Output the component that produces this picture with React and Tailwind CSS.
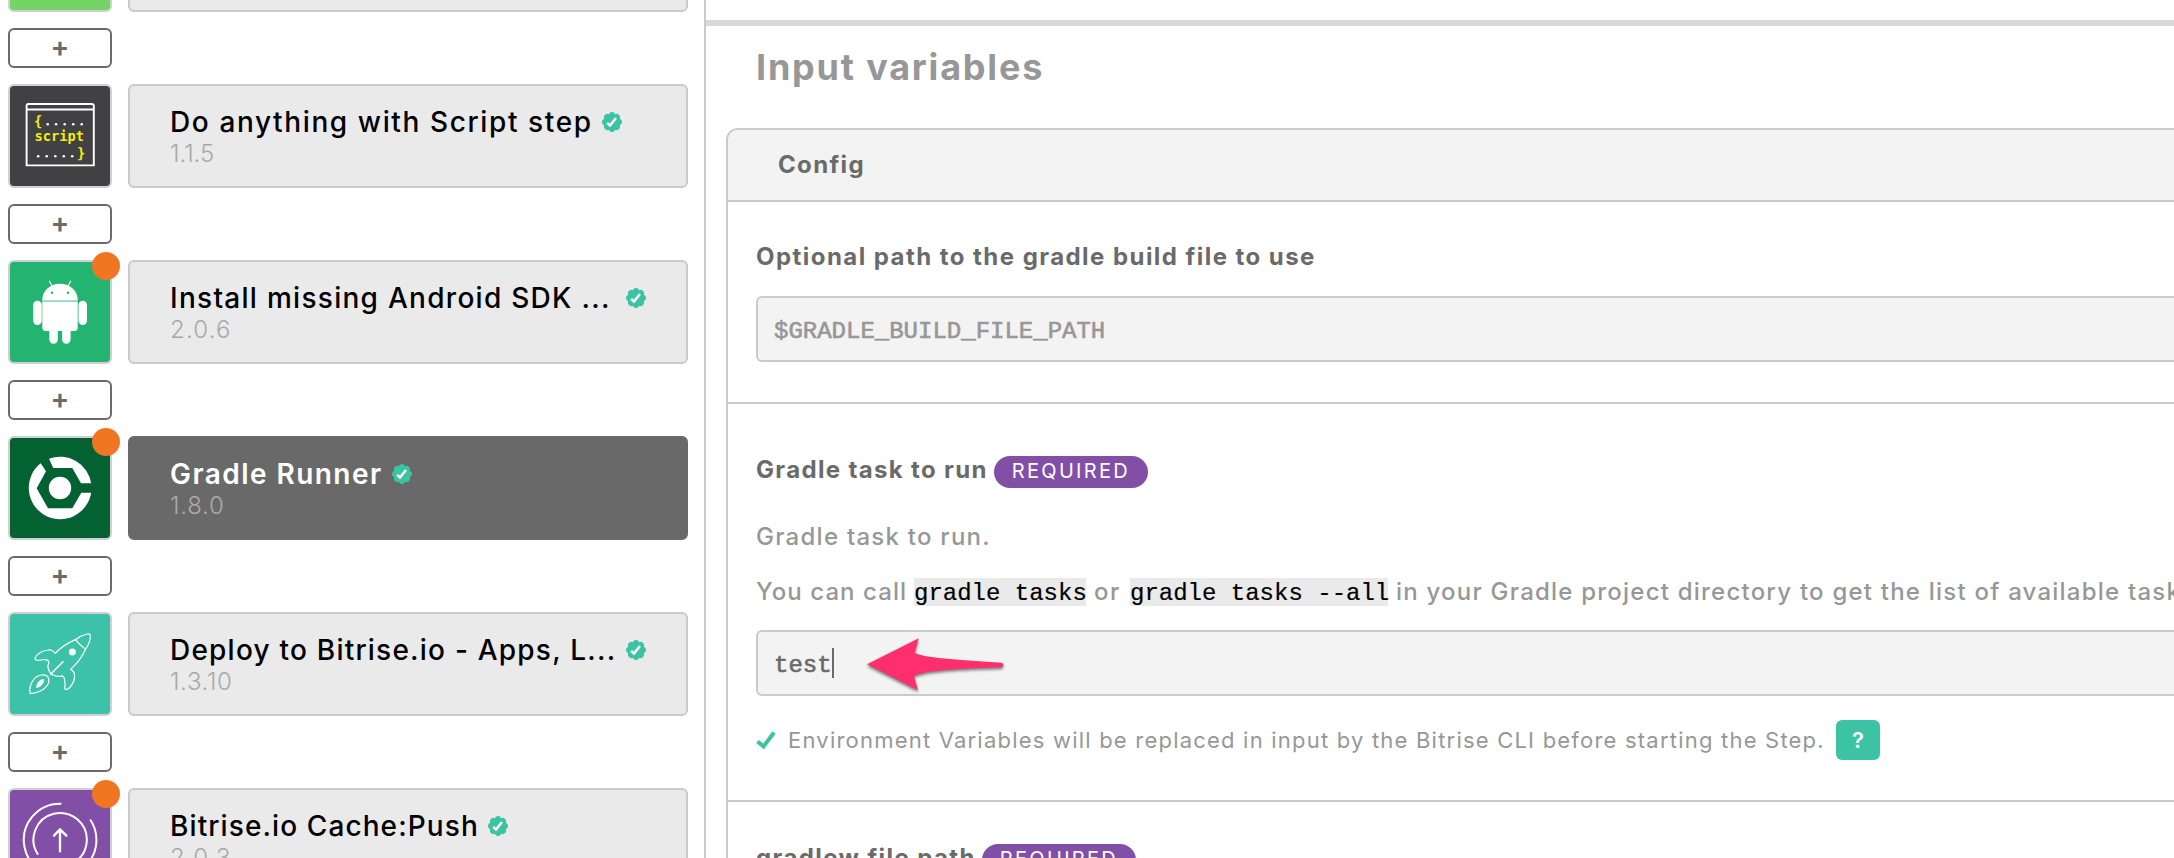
const ScriptIcon = () => (
  <svg viewBox="0 0 100 100" className="block size-full">
    <g transform="translate(-2 -2)">
      <path d="M18.6 81.4V22a2 2 0 0 1 2-2h63.2a2 2 0 0 1 2 2v59.4z" fill="none" stroke="#fff" strokeWidth="1.9" />
      <path d="M18.6 25.5h67.2" stroke="#fff" strokeWidth="1.9" />
      <g fill="#f5ea14" fontFamily="'DejaVu Sans Mono', monospace" fontWeight="700" fontSize="13.7">
        <text x="26" y="41.5">{"{"}</text>
        <text x="26.6" y="57.3">script</text>
        <text x="69" y="74">{"}"}</text>
      </g>
      <g fill="#fff">
        {[39.7, 48.1, 56.7, 65.2, 73.7].map((x) => <circle key={x} cx={x} cy="40.3" r="1.3" />)}
        {[30.2, 38.7, 47.3, 55.8, 64.2].map((x) => <circle key={x} cx={x} cy="72.3" r="1.3" />)}
      </g>
    </g>
  </svg>
);

const AndroidIcon = () => (
  <svg viewBox="0 0 100 100" className="block size-full">
    <g transform="translate(-2 -2)" fill="#fff">
      <rect x="34.3" y="39" width="35.4" height="5" fill="#8fd9b6" />
      <path d="M34.3 40.3C34.3 30.5 42 23.7 52 23.7s17.7 6.8 17.7 16.6z" />
      <path d="M34.3 42h35.4v25.5a3.5 3.5 0 0 1-3.5 3.5H37.8a3.5 3.5 0 0 1-3.5-3.5z" />
      <rect x="25.2" y="40.7" width="8.5" height="24.3" rx="4.2" />
      <rect x="70.5" y="40.7" width="8.5" height="24.3" rx="4.2" />
      <rect x="41.3" y="62" width="8.5" height="21.7" rx="4.2" />
      <rect x="54.1" y="62" width="8.5" height="21.7" rx="4.2" />
      <path d="M41.2 20.8l3 5.4M62.9 20.8l-3 5.4" stroke="#fff" strokeWidth="1.1" />
      <circle cx="44" cy="32.7" r="1.2" fill="#24b472" />
      <circle cx="60" cy="32.7" r="1.2" fill="#24b472" />
    </g>
  </svg>
);

const GradleIcon = () => (
  <svg viewBox="0 0 100 100" className="block size-full">
    <g transform="translate(-2 -2)" fill="#fff">
      <circle cx="52" cy="52" r="11.2" />
      <path d="M41 22.8A31.4 31.4 0 0 1 83.2 47.3H73L64.3 32H45.3z" />
      <path d="M32.7 27.2A31.4 31.4 0 1 0 83.2 56.7H73.3L64.3 72.3H40L28.7 52.3L38 35.3z" />
    </g>
  </svg>
);

const RocketIcon = () => (
  <svg viewBox="0 0 300 300" className="block size-full">
    <g transform="translate(-30 -222)" fill="none" stroke="#fff" strokeWidth="3.6" strokeLinejoin="round" strokeLinecap="round">
      <path d="M166 340C182 322 203 309 226 299C238 290 252 284 262 282Q272 280 271 290C270 305 264 317 257 327C247 350 232 370 212 388C226 394 227 415 218 430C211 442 203 450 196 448C191 446 197 438 195 428C194 416 192 408 186 407C177 412 166 408 159 405L150 397C143 386 142 376 147 369C147 359 135 357 122 360C112 363 103 360 105 354C110 342 130 330 145 330C158 328 161 335 166 340z" />
      <path d="M226 299C234 308 246 322 257 327" />
      <path d="M91 461C85 445 97 408 124 405C143 402 149 414 146 428C139 448 114 459 91 461z" />
      <path d="M189 365L152 403" strokeWidth="4.5" />
      <circle cx="217" cy="336" r="10.5" fill="#fff" stroke="none" />
      <path d="M109 444C107 431 119 417 132 417C134 430 122 442 109 444z" fill="#fff" stroke="none" />
    </g>
  </svg>
);

const CacheIcon = () => (
  <svg viewBox="0 0 300 300" className="block size-full">
    <g transform="translate(-30 -750)" fill="none" stroke="#fff" strokeWidth="6" strokeLinecap="round" strokeLinejoin="round">
      <path d="M182 791A109 109 0 1 0 226 999" />
      <path d="M272 841A109 109 0 0 1 262 972" />
      <path d="M113 942A80 80 0 1 1 150 973" />
      <path d="M180 934V868M162 887L180 868L199 887" strokeWidth="7" />
    </g>
  </svg>
);

const Verified = () => (
  <svg viewBox="-10 -10 20 20" className="size-5 shrink-0">
    <g fill="#3bc3a3">
      <circle r="8.6" />
      {[0, 45, 90, 135, 180, 225, 270, 315].map((a) => (
        <circle key={a} cy="-7" r="3" transform={`rotate(${a})`} />
      ))}
    </g>
    <path d="M-4.8 .9L-2 3.5L4 -4" fill="none" stroke="#fff" strokeWidth="2.5" />
  </svg>
);

const steps = [
  { title: "Do anything with Script step", version: "1.1.5", tile: "bg-[#414042]", Icon: ScriptIcon, name: "w-[432px] tracking-[1.61px]", ver: "tracking-normal" },
  { title: "Install missing Android SDK ...", version: "2.0.6", tile: "bg-[#24b472]", Icon: AndroidIcon, dot: true, name: "w-[456px] tracking-[1.28px]", ver: "tracking-[1.18px]" },
  { title: "Gradle Runner", version: "1.8.0", tile: "bg-[#046232]", Icon: GradleIcon, dot: true, active: true, name: "w-[222px] tracking-[1.45px]", ver: "tracking-[0.76px]" },
  { title: "Deploy to Bitrise.io - Apps, L...", version: "1.3.10", tile: "bg-[#3bc2a9]", Icon: RocketIcon, name: "w-[456px] tracking-[1.22px]", ver: "tracking-[0.66px]" },
  { title: "Bitrise.io Cache:Push", version: "2.0.3", tile: "bg-[#824fa6]", Icon: CacheIcon, dot: true, name: "w-[318px] tracking-[1.1px]", ver: "tracking-[1.18px]" },
];

const Tile = ({ color, dot, children }) => (
  <div className="relative size-[104px] shrink-0 rounded-[6px] border-2 border-[#d0d0d0] bg-[#d0d0d0]">
    <div className={`size-full rounded-[4px] ${color}`}>{children}</div>
    {dot && <span className="absolute -top-[10px] -right-[10px] size-7 rounded-full bg-[#f07621]" />}
  </div>
);

const AddButton = () => (
  <button className="flex h-10 w-[104px] shrink-0 items-center justify-center rounded-[6px] border-2 border-[#6a6a6a] pb-[3px] text-[28px] leading-none font-semibold text-[#6a6a6a]">
    +
  </button>
);

const Step = ({ title, version, tile, Icon, dot, active, name, ver }) => (
  <div className="flex shrink-0 gap-4">
    <Tile color={tile} dot={dot}><Icon /></Tile>
    <div className={`h-[104px] w-[560px] rounded-[6px] border-2 pt-[19px] pl-[40px] ${active ? "border-[#696969] bg-[#696969]" : "border-[#cacaca] bg-[#eaeaea]"}`}>
      <div className="flex items-center">
        <span className={`shrink-0 text-[28px] leading-[34px] whitespace-nowrap ${name} ${active ? "font-semibold text-white" : "font-medium text-black"}`}>{title}</span>
        <Verified />
      </div>
      <div className={`text-[24px] leading-[29px] font-light text-[#a9a9a9] ${ver}`}>{version}</div>
    </div>
  </div>
);

const Required = () => (
  <span className="h-8 w-[154px] rounded-full bg-[#824fa6] pl-[18px] text-[20px] leading-[31px] tracking-[2.3px] text-white">REQUIRED</span>
);

const Code = ({ children, width }) => (
  <code className={`h-7 shrink-0 bg-[#eaeaea] font-['Liberation_Mono',monospace] text-[24px] leading-[32px] text-black [-webkit-text-stroke:0.2px_black] ${width}`}>{children}</code>
);

const Field = ({ children, className }) => (
  <div className={`relative flex h-[66px] items-center rounded-l-[6px] border-2 border-r-0 border-[#cacaca] bg-[#f3f3f3] pl-4 font-['Liberation_Mono',monospace] text-[24px] ${className}`}>{children}</div>
);

const Arrow = () => (
  <svg viewBox="0 0 480 270" className="absolute -top-[17px] left-[102px] h-[90px] w-[160px] drop-shadow-[0_2px_1.5px_rgba(0,0,0,0.5)]">
    <path d="M21 148L176 70L164 114C200 130 300 135 424 143Q430 144 430 151Q430 157 424 157C300 161 195 165 162 184L174 226z" fill="#ff2f6d" />
  </svg>
);

export default function App() {
  return (
    <div className="flex h-[858px] w-[2174px] overflow-hidden bg-white font-['Inter',sans-serif]">
      <aside className="flex w-[704px] shrink-0 flex-col justify-start overflow-hidden pl-2">
        <div className="-mt-[92px] flex shrink-0 gap-4">
          <Tile color="bg-[#74d465]" />
          <div className="h-[104px] w-[560px] rounded-[6px] border-2 border-[#cacaca] bg-[#eaeaea]" />
        </div>
        {steps.map((s) => (
          <div key={s.title} className="flex shrink-0 flex-col gap-4 pt-4">
            <AddButton />
            <Step {...s} />
          </div>
        ))}
      </aside>

      <main className="min-w-0 flex-1 overflow-hidden border-l-2 border-[#cacaca] pt-5">
        <div className="h-[6px] bg-[#d8d8d8]" />
        <h2 className="mt-[19px] pl-[50px] text-[36px] leading-[44px] font-bold tracking-[1.8px] text-[#979797]">Input variables</h2>

        <section className="mt-[39px] ml-5 rounded-tl-[12px] border-t-2 border-l-2 border-[#cacaca]">
          <div className="h-[72px] rounded-tl-[10px] border-b-2 border-[#cacaca] bg-[#f3f3f3] pt-[21px] pl-[50px] text-[24px] leading-[28px] font-bold tracking-[1.35px] text-[#6a6a6a]">Config</div>

          <div className="h-[202px] border-b-2 border-[#cacaca] pt-[41px] pl-7">
            <div className="text-[24px] leading-[28px] font-bold tracking-[1.45px] text-[#6a6a6a]">Optional path to the gradle build file to use</div>
            <Field className="mt-[25px] text-[#979797] [-webkit-text-stroke:0.6px_#979797]"><span className="pt-1.5">$GRADLE_BUILD_FILE_PATH</span></Field>
          </div>

          <div className="h-[398px] border-b-2 border-[#cacaca] pt-[52px] pl-7">
            <div className="flex items-start gap-1.5">
              <span className="text-[24px] leading-[28px] font-bold tracking-[1.35px] text-[#6a6a6a]">Gradle task to run</span>
              <Required />
            </div>
            <p className="mt-[35px] text-[24px] leading-[28px] font-medium tracking-[1.25px] text-[#979797]">Gradle task to run.</p>
            <p className="mt-[27px] flex text-[24px] leading-[28px] font-medium whitespace-nowrap text-[#979797]">
              <span className="w-[158px] shrink-0 tracking-[1.07px]">You can call</span>
              <Code width="w-[172px]">gradle tasks</Code>
              <span className="w-11 shrink-0 pl-2 tracking-[1.5px]">or</span>
              <Code width="w-[258px]">gradle tasks --all</Code>
              <span className="pl-2 tracking-[1.22px]">in your Gradle project directory to get the list of available tasks.</span>
            </p>
            <Field className="mt-6 text-[#6a6a6a] [-webkit-text-stroke:0.6px_#6a6a6a]">
              <span className="pt-1.5">test</span>
              <span className="h-[30px] w-[2px] bg-[#6a6a6a]" />
              <Arrow />
            </Field>
            <div className="mt-6 flex h-10 items-center">
              <svg viewBox="0 0 20 18" className="h-[18px] w-5 shrink-0"><path d="M1.5 10.5L7.5 15.5L18 1.5" fill="none" stroke="#3bc3a3" strokeWidth="4" /></svg>
              <span className="w-[1060px] shrink-0 pl-3 text-[22px] tracking-[1.21px] whitespace-nowrap text-[#979797]">Environment Variables will be replaced in input by the Bitrise CLI before starting the Step.</span>
              <button className="h-10 w-11 rounded-[6px] bg-[#3bc3a3] text-[22px] font-semibold text-white">?</button>
            </div>
          </div>

          <div className="pt-[42px] pl-7">
            <div className="flex items-start gap-1.5">
              <span className="text-[24px] leading-[28px] font-bold tracking-[1.4px] text-[#6a6a6a]">gradlew file path</span>
              <Required />
            </div>
          </div>
        </section>
      </main>
    </div>
  );
}
